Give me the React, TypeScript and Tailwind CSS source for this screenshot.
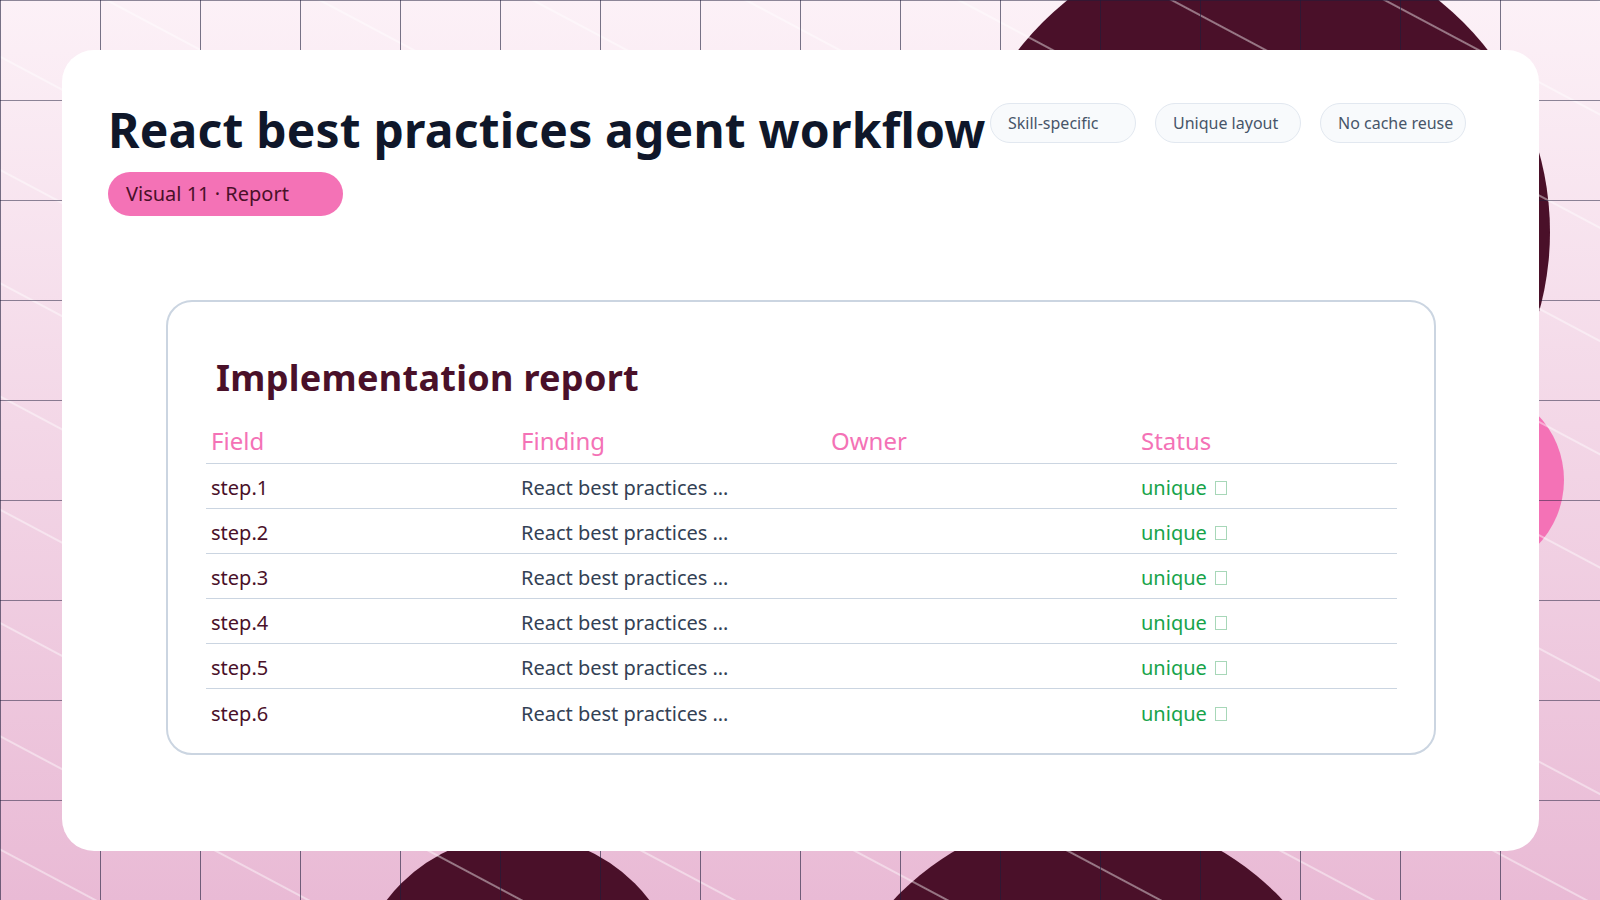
import React from "react";

const rows = [1, 2, 3, 4, 5, 6];

function Backdrop() {
  return (
    <svg className="absolute inset-0 w-full h-full" width="1600" height="900" viewBox="0 0 1600 900">
      <defs>
        <linearGradient id="bg" x1="0" y1="0" x2="0" y2="1">
          <stop offset="0" stopColor="#fcf1f7" />
          <stop offset="1" stopColor="#e9bad5" />
        </linearGradient>
        <pattern id="grid" width="100" height="100" patternUnits="userSpaceOnUse">
          <path d="M0 0 H100 M0 0 V100" stroke="#1e1b3a" strokeWidth="1.2" fill="none" />
        </pattern>
        <pattern id="diag" width="100" height="100" patternUnits="userSpaceOnUse" patternTransform="rotate(28)">
          <path d="M0 50 H100" stroke="#ffffff" strokeOpacity="0.85" strokeWidth="1" />
        </pattern>
      </defs>
      <rect width="1600" height="900" fill="url(#bg)" />
      <circle cx="1253" cy="232" r="297" fill="#4a1029" />
      <circle cx="1470" cy="480" r="94" fill="#f472b6" />
      <circle cx="518" cy="1000" r="165" fill="#4a1029" />
      <circle cx="1088" cy="1080" r="265" fill="#4a1029" />
      <rect width="1600" height="900" fill="url(#diag)" />
      <rect width="1600" height="900" fill="url(#grid)" />
    </svg>
  );
}

export default function App() {
  return (
    <div className="relative w-[1600px] h-[900px] overflow-hidden font-['Liberation_Sans',Arial,sans-serif]">
      <Backdrop />
      <div className="relative mt-[50px] ml-[62px] w-[1477px] h-[801px] bg-white rounded-[32px] pl-[46px] pr-[73px] pt-[52px]">
        <div className="flex justify-between items-start">
          <div>
            <h1 className="text-[48px] leading-[56px] font-bold text-[#0f172a] tracking-[0.2px]">
              React best practices agent workflow
            </h1>
            <div className="mt-[14px] inline-flex items-center h-[44px] w-[235px] rounded-full bg-[#f472b6] pl-[18px] text-[20px] text-[#4a1029]">
              Visual 11 · Report
            </div>
          </div>
          <div className="flex gap-[19px] mt-[1px]">
            {["Skill-specific", "Unique layout", "No cache reuse"].map((t) => (
              <div key={t} className="h-[40px] w-[146px] rounded-full bg-[#f8fafc] border border-[#e2e8f0] pl-[17px] flex items-center text-[16px] text-[#475569]">
                {t}
              </div>
            ))}
          </div>
        </div>
        <div className="mt-[84px] ml-[58px] w-[1270px] h-[455px] rounded-[26px] border-2 border-[#cbd5e1] pl-[38px] pr-[38px] pt-[54px]">
          <h2 className="pl-[10px] text-[36px] leading-[44px] font-bold text-[#4a1029] tracking-[0.3px]">Implementation report</h2>
          <div className="mt-[18px] w-[1191px]">
            <div className="grid grid-cols-[310px_310px_310px_1fr] border-b border-[#cbd5e1] h-[46px] items-center text-[24px] text-[#f472b6] pl-[5px]">
              <div>Field</div>
              <div>Finding</div>
              <div>Owner</div>
              <div>Status</div>
            </div>
            {rows.map((n, i) => (
              <div
                key={n}
                className={`grid grid-cols-[310px_310px_310px_1fr] h-[45px] items-end pb-[5px] text-[20px] pl-[5px] ${i < 5 ? "border-b border-[#cbd5e1]" : ""}`}
              >
                <div className="text-[#4a1029]">step.{n}</div>
                <div className="text-[#334155]">React best practices …</div>
                <div></div>
                <div className="text-[#16a34a] flex items-center gap-[8px]">
                  unique
                  <span className="inline-block w-[12px] h-[14px] border border-[#a7d7b8]"></span>
                </div>
              </div>
            ))}
          </div>
        </div>
      </div>
    </div>
  );
}
